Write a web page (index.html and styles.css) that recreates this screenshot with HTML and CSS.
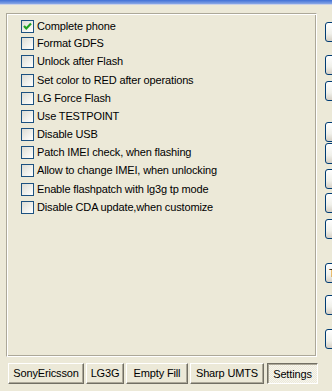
FILE: index.html
```html
<!DOCTYPE html>
<html>
<head>
<meta charset="utf-8">
<link rel="stylesheet" href="styles.css">
</head>
<body>
<div class="titlebar"></div>
<div class="main">
  <div class="panel">
    <div class="row"><span class="cb checked"><svg viewBox="0 0 11 11" width="11" height="11"><path d="M2 5 L4.3 7.5 L9 2.6" fill="none" stroke="#21a121" stroke-width="2.2"/></svg></span><span class="lbl">Complete phone</span></div>
    <div class="row up"><span class="cb"></span><span class="lbl">Format GDFS</span></div>
    <div class="row"><span class="cb"></span><span class="lbl">Unlock after Flash</span></div>
    <div class="row down"><span class="cb"></span><span class="lbl">Set color to RED after operations</span></div>
    <div class="row"><span class="cb"></span><span class="lbl">LG Force Flash</span></div>
    <div class="row"><span class="cb"></span><span class="lbl">Use TESTPOINT</span></div>
    <div class="row"><span class="cb"></span><span class="lbl">Disable USB</span></div>
    <div class="row"><span class="cb"></span><span class="lbl">Patch IMEI check, when flashing</span></div>
    <div class="row"><span class="cb"></span><span class="lbl">Allow to change IMEI, when unlocking</span></div>
    <div class="row down"><span class="cb"></span><span class="lbl">Enable flashpatch with lg3g tp mode</span></div>
    <div class="row"><span class="cb"></span><span class="lbl">Disable CDA update,when customize</span></div>
  </div>
  <div class="side">
    <div class="xbtn b1"></div>
    <div class="xbtn b2"></div>
    <div class="xbtn b3"></div>
    <div class="xbtn b4"></div>
    <div class="xbtn b5"></div>
    <div class="xbtn b6"></div>
    <div class="xbtn b7"></div>
    <div class="xbtn b8"></div>
    <div class="xbtn b9">T</div>
    <div class="xbtn b10"></div>
    <div class="xbtn b11"></div>
  </div>
</div>
<div class="tabs">
  <div class="tab w1">SonyEricsson</div>
  <div class="tab w2">LG3G</div>
  <div class="tab w3">Empty Fill</div>
  <div class="tab w4">Sharp UMTS</div>
  <div class="tab w5 active">Settings</div>
</div>
</body>
</html>
```
FILE: styles.css
```css
html, body {
  margin: 0;
  padding: 0;
}
body {
  width: 332px;
  height: 391px;
  overflow: hidden;
  background: #ece9d8;
  font-family: Tahoma, "Liberation Sans", Arial, sans-serif;
  font-size: 11px;
  letter-spacing: -0.15px;
  color: #000;
}
.titlebar {
  height: 4px;
  background: linear-gradient(#3f6fd6, #8aa8e6);
  border-bottom: 1px solid #c8d0e8;
}
.main {
  display: flex;
  margin-top: 8px;
  width: 400px;
}
.panel {
  box-sizing: border-box;
  flex: 0 0 311px;
  width: 311px;
  height: 344px;
  margin-left: 6px;
  border: 1px solid;
  border-color: #aca899 #fff #fff #aca899;
  box-shadow: inset 1px 1px 0 #fff, inset -1px -1px 0 #aca899;
  padding: 4px 0 0 14px;
}
.row {
  display: flex;
  align-items: flex-start;
  height: 18px;
}
.row.up { margin-top: -1px; }
.row.down { margin-top: 1px; }
.cb {
  box-sizing: border-box;
  width: 13px;
  height: 13px;
  margin-top: 2px;
  border: 1px solid #1c5180;
  background: linear-gradient(135deg, #dcdcd4 0%, #f2f2ee 60%, #ffffff 100%);
  display: flex;
  align-items: center;
  justify-content: center;
  flex-shrink: 0;
}
.cb svg { display: block; }
.lbl {
  margin-left: 3px;
  line-height: 17px;
  white-space: nowrap;
}
.side {
  display: flex;
  flex-direction: column;
  flex: 0 0 60px;
  margin-left: 8px;
}
.xbtn {
  box-sizing: border-box;
  width: 60px;
  height: 20px;
  border: 1px solid #003c74;
  border-radius: 3px;
  background: linear-gradient(#ffffff, #f0f0ea 60%, #d6d0c5);
  padding-left: 3px;
  line-height: 18px;
  flex-shrink: 0;
}
.b1 { margin-top: 9px; }
.b2 { margin-top: 13px; }
.b3 { margin-top: 6px; }
.b4 { margin-top: 21px; }
.b5 { margin-top: 1px; height: 21px; }
.b6 { margin-top: 5px; }
.b7 { margin-top: 4px; }
.b8 { margin-top: 6px; }
.b9 { margin-top: 24px; }
.b10 { margin-top: 12px; }
.b11 { margin-top: 14px; }
.tabs {
  display: flex;
  gap: 2px;
  margin-top: 6px;
  margin-left: 8px;
}
.tab {
  box-sizing: border-box;
  height: 21px;
  border: 1px solid;
  border-color: #fff #716f64 #716f64 #fff;
  box-shadow: inset -1px -1px 0 #aca899;
  text-align: center;
  line-height: 19px;
  white-space: nowrap;
}
.w1 { width: 76px; }
.w2 { width: 38px; }
.w3 { width: 62px; }
.w4 { width: 74px; }
.w5 { width: 51px; margin-left: 1px; }
.tab.active {
  border-color: #716f64 #fff #fff #716f64;
  box-shadow: inset 1px 1px 0 #aca899;
  background-color: #f6f5ef;
  background-image:
    linear-gradient(45deg, #ece9d8 25%, transparent 25%, transparent 75%, #ece9d8 75%),
    linear-gradient(45deg, #ece9d8 25%, transparent 25%, transparent 75%, #ece9d8 75%);
  background-size: 2px 2px;
  background-position: 0 0, 1px 1px;
  padding-top: 1px;
}
```
